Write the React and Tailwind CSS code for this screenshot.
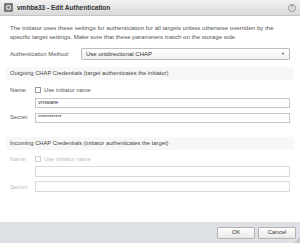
export default function App() {
  return (
    <div className="w-[300px] h-[243px] bg-white flex flex-col overflow-hidden text-[#333] font-['Liberation_Sans',Arial,sans-serif]">
      <div className="h-[16px] flex items-center px-[4px] bg-gradient-to-b from-[#f2f2f2] to-[#d9d9d9] border-b border-[#c4c4c4]">
        <div className="w-[9px] h-[9px] bg-[#7a7a7a] rounded-[1px] flex items-center justify-center">
          <div className="w-[5px] h-[5px] rounded-full border border-white" />
        </div>
        <span className="ml-[4px] text-[6.5px] font-bold text-[#333]">vmhba33 - Edit Authentication</span>
        <div className="ml-auto w-[8px] h-[8px] rounded-full border border-[#999] text-[5px] flex items-center justify-center text-[#777]">?</div>
      </div>
      <div className="flex-1 px-[10px] pt-[7px]">
        <p className="text-[6.1px] leading-[9px] text-[#555]">
          The initiator uses these settings for authentication for all targets unless otherwise overriden by the specific target settings. Make sure that these parameters match on the storage side.
        </p>
        <div className="flex items-center mt-[7px]">
          <span className="w-[71px] text-[5.8px] text-[#555]">Authentication Method:</span>
          <div className="flex-1 h-[12px] border border-[#bdbdbd] rounded-[1px] bg-gradient-to-b from-white to-[#f0f0f0] flex items-center px-[4px]">
            <span className="text-[6px] text-[#333]">Use unidirectional CHAP</span>
            <span className="ml-auto text-[4px] text-[#555]">▼</span>
          </div>
        </div>
        <div className="mt-[7px] -mx-[4px] px-[4px] h-[13px] bg-[#f7f7f7] flex items-center text-[5.8px] text-[#444]">
          Outgoing CHAP Credentials (target authenticates the initiator)
        </div>
        <div className="flex items-center mt-[6px]">
          <span className="w-[25px] text-[5.8px] text-[#555]">Name:</span>
          <div className="w-[6px] h-[6px] border border-[#999] bg-white" />
          <span className="ml-[3px] text-[5.8px] text-[#555]">Use initiator name</span>
        </div>
        <div className="flex items-center mt-[3px]">
          <span className="w-[25px]" />
          <div className="flex-1 h-[10px] border border-[#c6c6c6] flex items-center px-[2px] text-[5.8px] text-[#333]">vmware</div>
        </div>
        <div className="flex items-center mt-[5px]">
          <span className="w-[25px] text-[5.8px] text-[#555]">Secret:</span>
          <div className="flex-1 h-[10px] border border-[#c6c6c6] flex items-center px-[2px] text-[5px] text-[#333]">************</div>
        </div>
        <div className="mt-[14px] -mx-[4px] px-[4px] h-[13px] bg-[#f7f7f7] flex items-center text-[5.8px] text-[#444]">
          Incoming CHAP Credentials (initiator authenticates the target)
        </div>
        <div className="flex items-center mt-[5px] text-[#bbb]">
          <span className="w-[25px] text-[5.8px]">Name:</span>
          <div className="w-[6px] h-[6px] border border-[#ccc] bg-white" />
          <span className="ml-[3px] text-[5.8px]">Use initiator name</span>
        </div>
        <div className="flex items-center mt-[3px]">
          <span className="w-[25px]" />
          <div className="flex-1 h-[11px] border border-[#dadada]" />
        </div>
        <div className="flex items-center mt-[4px] text-[#bbb]">
          <span className="w-[25px] text-[5.8px]">Secret:</span>
          <div className="flex-1 h-[11px] border border-[#dadada]" />
        </div>
      </div>
      <div className="h-[21px] bg-[#dde1e6] flex items-center justify-end gap-[3px] pr-[4px] relative">
        <button className="w-[38px] h-[12px] border border-[#b3b3b3] rounded-[1px] bg-gradient-to-b from-white to-[#e8e8e8] text-[6px] text-[#333]">OK</button>
        <button className="w-[38px] h-[12px] border border-[#b3b3b3] rounded-[1px] bg-gradient-to-b from-white to-[#e8e8e8] text-[6px] text-[#333]">Cancel</button>
        <svg className="absolute right-0 bottom-0" width="6" height="6" viewBox="0 0 6 6">
          <path d="M6 1 L1 6 M6 3 L3 6 M6 5 L5 6" stroke="#999" strokeWidth="0.7" />
        </svg>
      </div>
    </div>
  );
}
